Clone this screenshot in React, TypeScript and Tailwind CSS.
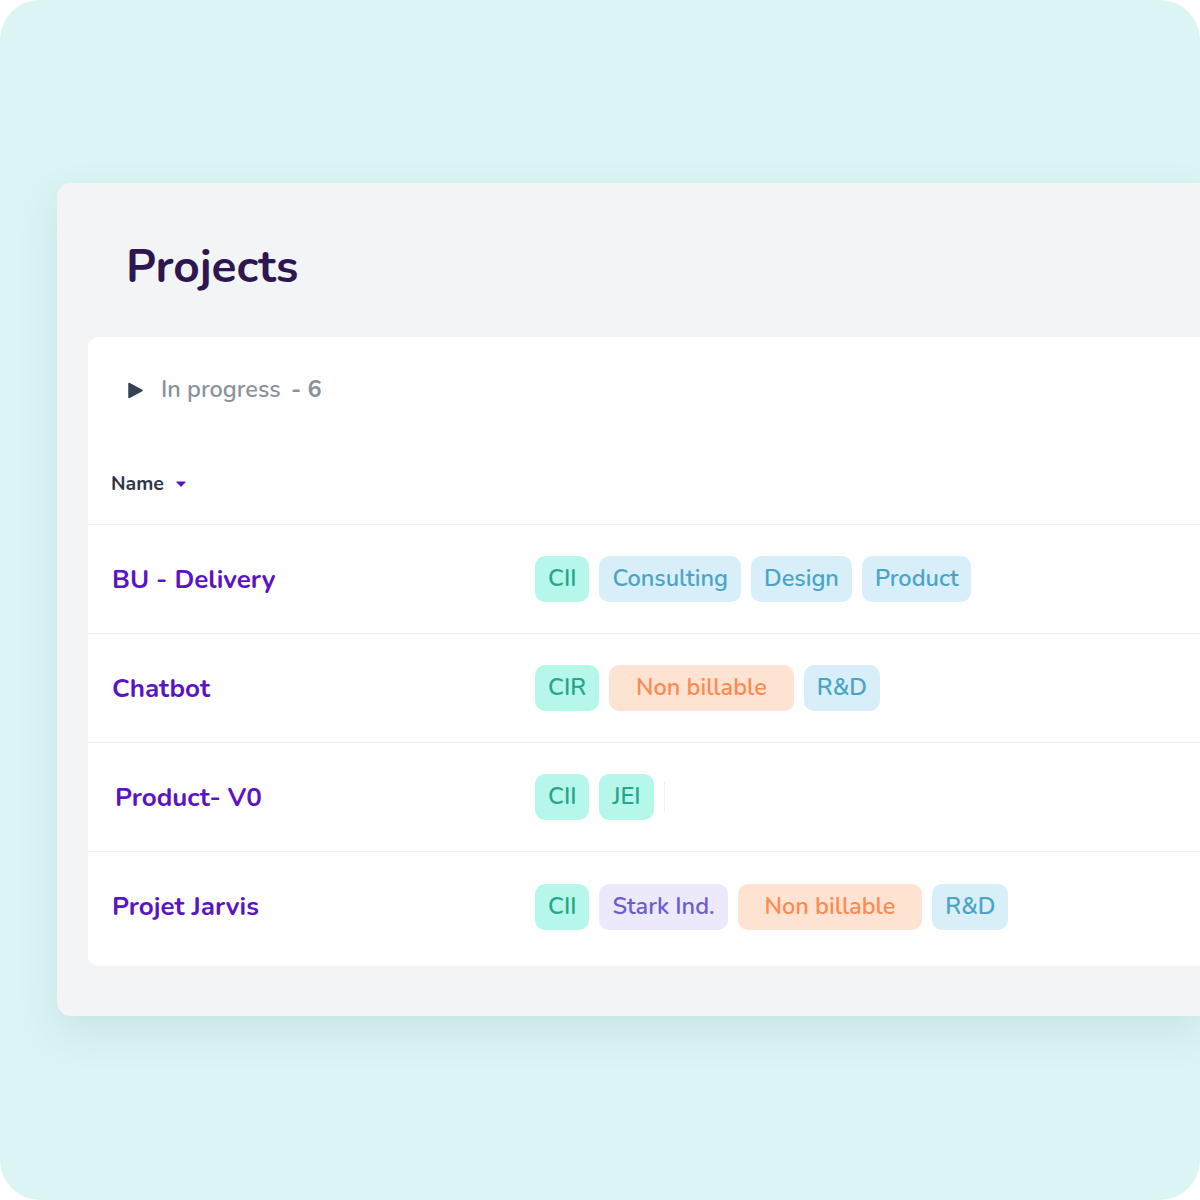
const font = { fontFamily: '"Nunito", Lato, "Noto Sans", sans-serif' };

type Tag = { label: string; tone: 'green' | 'blue' | 'orange' | 'violet' };

const toneClass: Record<Tag['tone'], string> = {
  green: 'bg-[#b5f8ea] text-[#2aa58a] px-[13px]',
  blue: 'bg-[#d8eff9] text-[#4ba4c5] px-[13px]',
  orange: 'bg-[#ffe3d2] text-[#ff8a4f] px-[27px]',
  violet: 'bg-[#ece9fd] text-[#6b5ccf] px-[13px]',
};

const projects: { name: string; tags: Tag[]; divider?: boolean; indent?: boolean }[] = [
  {
    name: 'BU - Delivery',
    tags: [
      { label: 'CII', tone: 'green' },
      { label: 'Consulting', tone: 'blue' },
      { label: 'Design', tone: 'blue' },
      { label: 'Product', tone: 'blue' },
    ],
  },
  {
    name: 'Chatbot',
    tags: [
      { label: 'CIR', tone: 'green' },
      { label: 'Non billable', tone: 'orange' },
      { label: 'R&D', tone: 'blue' },
    ],
  },
  {
    name: 'Product- V0',
    divider: true,
    indent: true,
    tags: [
      { label: 'CII', tone: 'green' },
      { label: 'JEI', tone: 'green' },
    ],
  },
  {
    name: 'Projet Jarvis',
    tags: [
      { label: 'CII', tone: 'green' },
      { label: 'Stark Ind.', tone: 'violet' },
      { label: 'Non billable', tone: 'orange' },
      { label: 'R&D', tone: 'blue' },
    ],
  },
];

function Pill({ tag }: { tag: Tag }) {
  return (
    <span
      className={`flex h-[46px] items-center rounded-[10px] text-[23.5px] font-semibold ${toneClass[tag.tone]}`}
    >
      {tag.label}
    </span>
  );
}

export default function App() {
  return (
    <div className="h-[1200px] w-[1200px] bg-white" style={font}>
      <div className="h-full overflow-hidden rounded-[40px] bg-[#dbf4f4] pl-[57px] pt-[183px]">
        <div className="h-[833px] rounded-l-[14px] bg-[#f3f4f6] pl-[31px] shadow-[0_16px_40px_rgba(60,120,120,0.12)]">
          <h1 className="h-[154px] pl-[38px] pt-[56px] text-[46px] font-bold leading-[56px] text-[#2e1650]">
            Projects
          </h1>
          <div className="h-[629px] rounded-l-[10px] bg-white">
            <div className="flex h-[106px] items-center gap-[18px] pl-[40px]">
              <svg width="15" height="17" viewBox="0 0 15 17">
                <path d="M1 1.5 L14 8.5 L1 15.5 Z" fill="#334155" stroke="#334155" strokeWidth="1.5" strokeLinejoin="round" />
              </svg>
              <span className="text-[23.5px] font-semibold text-[#8a919e]">
                In progress <span className="ml-[4px] font-bold">- 6</span>
              </span>
            </div>
            <div className="flex h-[82px] items-center gap-[12px] border-b border-[#eef0f2] pl-[23px]">
              <span className="text-[19.5px] font-bold text-[#2d3748]">Name</span>
              <svg width="10" height="6" viewBox="0 0 10 6">
                <path d="M1 1 L9 1 L5 5 Z" fill="#5b14c4" stroke="#5b14c4" strokeWidth="1.2" strokeLinejoin="round" />
              </svg>
            </div>
            {projects.map((p, i) => (
              <div
                key={p.name}
                className={`flex h-[109px] items-center ${
                  i < projects.length - 1 ? 'border-b border-[#eef0f2]' : ''
                }`}
              >
                <div
                  className={`w-[447px] text-[26px] font-bold text-[#5b14c4] ${
                    p.indent ? 'pl-[27px]' : 'pl-[24px]'
                  }`}
                >
                  {p.name}
                </div>
                <div className="flex items-center gap-[10px]">
                  {p.tags.map((t, j) => (
                    <Pill key={j} tag={t} />
                  ))}
                  {p.divider && <span className="h-[30px] w-px bg-[#eef0f2]" />}
                </div>
              </div>
            ))}
          </div>
        </div>
      </div>
    </div>
  );
}
